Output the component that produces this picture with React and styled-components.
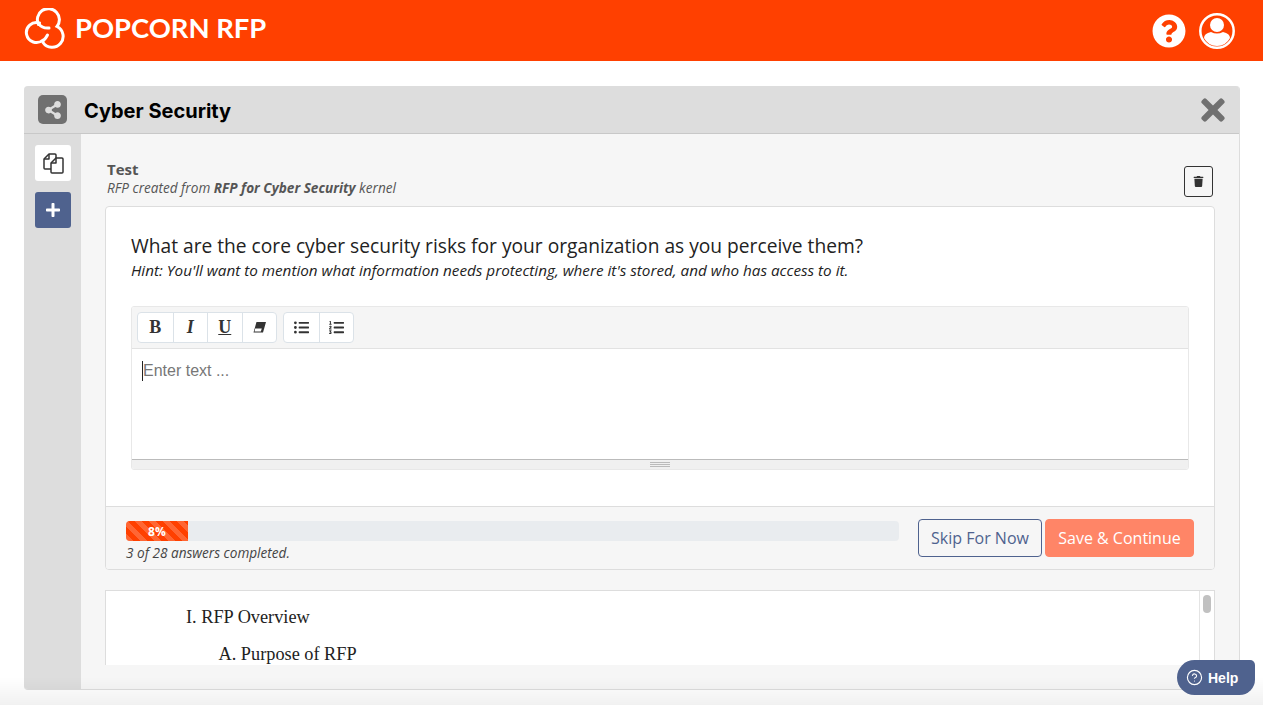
import React from 'react';
import styled, { createGlobalStyle } from "styled-components";
import { FaQuestionCircle, FaTimes, FaTrash, FaPlus, FaShareAlt, FaListUl, FaListOl } from "react-icons/fa";
import { CircleHelp } from "lucide-react";

const GlobalStyle = createGlobalStyle`
html, body {
    margin: 0;
    padding: 0;
    height: 705px;
    overflow: hidden;
    background: #fff;
    font-family: "Open Sans", "Liberation Sans", sans-serif;
}
* { box-sizing: border-box; }
`

const Page = styled.div`
display: flex;
flex-direction: column;
height: 705px;
`
const TopBar = styled.header`
height: 61px;
flex: none;
background: #ff4000;
display: flex;
align-items: center;
justify-content: space-between;
padding: 0 28px 0 24px;
color: #fff;
`
const Brand = styled.div`
display: flex;
align-items: center;
gap: 7px;
`
const BrandName = styled.span`
font-family: Lato, "Open Sans", sans-serif;
font-weight: 700;
font-size: 27.4px;
line-height: 1;
margin-top: -6px;
`
const TopIcons = styled.div`
display: flex;
align-items: center;
gap: 13px;
`
const Panel = styled.section`
margin: 25px 23px 0 24px;
height: 604px;
flex: none;
display: flex;
flex-direction: column;
border-radius: 4px;
border-right: 1px solid #ddd;
border-bottom: 1px solid #ddd;
background: #f6f6f6;
overflow: hidden;
`
const PanelHead = styled.div`
height: 48px;
flex: none;
background: #ddd;
border-bottom: 1px solid #c8c8c8;
display: flex;
align-items: center;
padding: 0 13px 0 14px;
`
const ShareBadge = styled.div`
width: 29px;
height: 29px;
border-radius: 5px;
background: #707070;
color: #ddd;
display: flex;
align-items: center;
justify-content: center;
`
const PanelTitle = styled.h1`
margin: 2px 0 0 17px;
flex: 1;
font-family: Inter, "Open Sans", sans-serif;
font-size: 20px;
font-weight: 700;
color: #000;
`
const CloseIcon = styled(FaTimes)`
color: #707070;
width: 26px;
height: 34px;
`
const PanelBody = styled.div`
flex: 1;
display: flex;
min-height: 0;
`
const Rail = styled.nav`
width: 57px;
flex: none;
background: #ddd;
padding: 11px 0 0 11px;
display: flex;
flex-direction: column;
gap: 11px;
`
const RailButton = styled.div`
width: 36px;
height: 36px;
border-radius: 3px;
display: flex;
align-items: center;
justify-content: center;
background: ${p => p.$primary ? "#4f628e" : "#fff"};
color: ${p => p.$primary ? "#fff" : "#333"};
`
const Content = styled.main`
flex: 1;
min-width: 0;
padding: 26px 24px 0 24px;
overflow: hidden;
`
const RfpHead = styled.div`
display: flex;
justify-content: space-between;
align-items: flex-start;
height: 46px;
padding: 0 2px;
`
const RfpName = styled.div`
font-size: 15px;
font-weight: 700;
color: #555;
line-height: 19px;
`
const RfpNote = styled.div`
font-size: 13.6px;
font-style: italic;
color: #555;
line-height: 18px;
`
const TrashButton = styled.div`
width: 29px;
height: 31px;
margin: 6px 0 0;
border: 1px solid #333;
border-radius: 3px;
display: flex;
align-items: center;
justify-content: center;
color: #333;
`
const QuestionCard = styled.div`
background: #fff;
border: 1px solid #ddd;
border-radius: 4px;
overflow: hidden;
`
const QuestionBody = styled.div`
height: 299px;
padding: 26px 25px 0;
`
const Question = styled.h2`
margin: 0;
font-size: 19.2px;
font-weight: 400;
color: #222;
line-height: 25px;
`
const Hint = styled.p`
margin: 0;
font-size: 15.25px;
font-style: italic;
color: #222;
line-height: 25px;
`
const Editor = styled.div`
margin-top: 23px;
border: 1px solid #e8e8e8;
border-radius: 3px;
overflow: hidden;
`
const Toolbar = styled.div`
height: 42px;
background: #f5f5f5;
border-bottom: 1px solid #e2e2e2;
display: flex;
padding: 5px;
gap: 6px;
`
const ToolGroup = styled.div`
display: flex;
height: 31px;
border: 1px solid #dbe2e8;
border-radius: 4px;
background: #fff;
overflow: hidden;
`
const ToolButton = styled.div`
width: 34.5px;
display: flex;
align-items: center;
justify-content: center;
color: #333;
font-family: "Liberation Serif", serif;
font-size: 18px;
font-weight: 700;
& + & { border-left: 1px solid #dbe2e8; }
`
const Writing = styled.div`
height: 110px;
background: #fff;
padding: 10px 10px;
`
const Placeholder = styled.span`
display: inline-block;
font-family: "Liberation Sans", Arial, sans-serif;
font-size: 16px;
line-height: 20px;
color: #777;
border-left: 1px solid #222;
`
const ResizeBar = styled.div`
height: 10px;
background: #f0f0f0;
border-top: 1px solid #bbb;
display: flex;
align-items: center;
justify-content: center;
`
const Grip = styled.div`
width: 20px;
height: 5px;
border-top: 1px solid #bbb;
border-bottom: 1px solid #bbb;
background: linear-gradient(#bbb, #bbb) center / 100% 1px no-repeat;
`
const CardFooter = styled.div`
height: 63px;
background: #f6f6f6;
border-top: 1px solid #ddd;
padding: 12px 20px 0;
display: flex;
gap: 19px;
`
const ProgressWrap = styled.div`
flex: 1;
min-width: 0;
padding-top: 2px;
`
const Progress = styled.div`
height: 20px;
background: #e9ecef;
border-radius: 4px;
overflow: hidden;
`
const ProgressFill = styled.div`
height: 100%;
display: flex;
align-items: center;
justify-content: center;
color: #fff;
font-size: 12px;
font-weight: 700;
background-color: #ff4000;
background-image: repeating-linear-gradient(45deg, rgba(255,255,255,.2) 0 5px, transparent 5px 10px);
`
const ProgressNote = styled.div`
font-size: 13.6px;
font-style: italic;
color: #444;
line-height: 23px;
`
const Buttons = styled.div`
display: flex;
gap: 3px;
height: 38px;
`
const Button = styled.button`
height: 38px;
font-family: inherit;
font-size: 16px;
border-radius: 4px;
padding: 0;
width: ${p => p.$save ? "149px" : "124px"};
border: 1px solid ${p => p.$save ? "#ff8567" : "#4f628e"};
background: ${p => p.$save ? "#ff8567" : "transparent"};
color: ${p => p.$save ? "#fff" : "#4f628e"};
`
const DocCard = styled.div`
margin-top: 20px;
height: 75px;
background: #fff;
border: 1px solid #ddd;
border-bottom: 0;
display: flex;
overflow: hidden;
`
const DocText = styled.div`
flex: 1;
padding: 13px 0 0 80px;
font-family: "Liberation Serif", serif;
font-size: 18.3px;
color: #222;
line-height: 26px;
`
const DocLine = styled.div`
margin-left: ${p => p.$level * 32.5}px;
margin-bottom: 11px;
`
const ScrollTrack = styled.div`
width: 15px;
flex: none;
border-left: 1px solid #e4e4e4;
background: #fff;
padding: 4px 3px 0 3px;
`
const ScrollThumb = styled.div`
height: 18px;
border-radius: 4px;
background: #c1c1c1;
`
const BottomFade = styled.div`
position: fixed;
left: 0;
right: 0;
bottom: 0;
height: 28px;
pointer-events: none;
background: linear-gradient(rgba(0,0,0,0), rgba(0,0,0,.055));
`
const HelpButton = styled.div`
position: fixed;
left: 1177px;
top: 660px;
width: 78px;
height: 35px;
background: #4f628e;
color: #fff;
border-radius: 18px 5px 16px 18px;
display: flex;
align-items: center;
gap: 5px;
padding-left: 9px;
font-family: "Liberation Sans", Arial, sans-serif;
font-size: 14px;
font-weight: 700;
`

const Logo = () => (
    <svg width="44" height="46" viewBox="0 0 44 46" fill="none" stroke="#fff" strokeWidth="3" strokeLinecap="round">
        <path d="M14.500 16.500A11 11 0 1 1 33 18.500A11 11 0 1 1 19 34.500" />
        <path d="M15.500 15A10 10 0 1 0 19 32" />
        <path d="M15 16Q18 20.500 25 20" />
        <path d="M19.500 32.500Q22 30 23.500 27" />
    </svg>
)

const ProfileIcon = () => (
    <svg width="36" height="36" viewBox="0 0 36 36" fill="#fff">
        <circle cx="18" cy="18" r="16.700" fill="none" stroke="#fff" strokeWidth="2.500" />
        <circle cx="18" cy="12" r="7" />
        <path d="M5 25Q5 20.500 12 19Q18 22 24 19Q31 20.500 31 25A14.600 14.600 0 0 1 5 25z" />
    </svg>
)

const CopyIcon = () => (
    <svg width="21" height="21" viewBox="0 0 21 21" fill="none" stroke="#333" strokeWidth="1.500" strokeLinejoin="round">
        <path d="M8 16H2a1 1 0 0 1-1-1V6L6 1H12a1 1 0 0 1 1 1V5" />
        <path d="M6 1V6H1" />
        <path d="M9 20a1 1 0 0 1-1-1V10L13 5H19a1 1 0 0 1 1 1V19a1 1 0 0 1-1 1z" />
        <path d="M13 5V10H8" />
    </svg>
)

const EraserIcon = () => (
    <svg width="13" height="11" viewBox="0 0 13 11">
        <path d="M3.500 0H13L10 10.500H0.500z" fill="#333" />
        <path d="M2.200 6.500H8.800L7.800 9.500H1.500z" fill="#fff" />
    </svg>
)

const App = () => {
    return (
        <>
            <GlobalStyle />
            <Page>
                <TopBar>
                    <Brand>
                        <Logo />
                        <BrandName>POPCORN RFP</BrandName>
                    </Brand>
                    <TopIcons>
                        <FaQuestionCircle size={34} />
                        <ProfileIcon />
                    </TopIcons>
                </TopBar>
                <Panel>
                    <PanelHead>
                        <ShareBadge><FaShareAlt size={18} /></ShareBadge>
                        <PanelTitle>Cyber Security</PanelTitle>
                        <CloseIcon />
                    </PanelHead>
                    <PanelBody>
                        <Rail>
                            <RailButton><CopyIcon /></RailButton>
                            <RailButton $primary><FaPlus size={16} /></RailButton>
                        </Rail>
                        <Content>
                            <RfpHead>
                                <div>
                                    <RfpName>Test</RfpName>
                                    <RfpNote>RFP created from <b>RFP for Cyber Security</b> kernel</RfpNote>
                                </div>
                                <TrashButton><FaTrash size={11} /></TrashButton>
                            </RfpHead>
                            <QuestionCard>
                                <QuestionBody>
                                    <Question>What are the core cyber security risks for your organization as you perceive them?</Question>
                                    <Hint>Hint: You'll want to mention what information needs protecting, where it's stored, and who has access to it.</Hint>
                                    <Editor>
                                        <Toolbar>
                                            <ToolGroup>
                                                <ToolButton>B</ToolButton>
                                                <ToolButton><i>I</i></ToolButton>
                                                <ToolButton><u>U</u></ToolButton>
                                                <ToolButton><EraserIcon /></ToolButton>
                                            </ToolGroup>
                                            <ToolGroup>
                                                <ToolButton><FaListUl size={15} /></ToolButton>
                                                <ToolButton><FaListOl size={15} /></ToolButton>
                                            </ToolGroup>
                                        </Toolbar>
                                        <Writing><Placeholder>Enter text ...</Placeholder></Writing>
                                        <ResizeBar><Grip /></ResizeBar>
                                    </Editor>
                                </QuestionBody>
                                <CardFooter>
                                    <ProgressWrap>
                                        <Progress>
                                            <ProgressFill style={{ width: "8%" }}>8%</ProgressFill>
                                        </Progress>
                                        <ProgressNote>3 of 28 answers completed.</ProgressNote>
                                    </ProgressWrap>
                                    <Buttons>
                                        <Button>Skip For Now</Button>
                                        <Button $save>Save &amp; Continue</Button>
                                    </Buttons>
                                </CardFooter>
                            </QuestionCard>
                            <DocCard>
                                <DocText>
                                    <DocLine $level={0}>I. RFP Overview</DocLine>
                                    <DocLine $level={1}>A. Purpose of RFP</DocLine>
                                </DocText>
                                <ScrollTrack><ScrollThumb /></ScrollTrack>
                            </DocCard>
                        </Content>
                    </PanelBody>
                </Panel>
            </Page>
            <BottomFade />
            <HelpButton><CircleHelp size={17} strokeWidth={1.6} />Help</HelpButton>
        </>
    );
};

export default App;
